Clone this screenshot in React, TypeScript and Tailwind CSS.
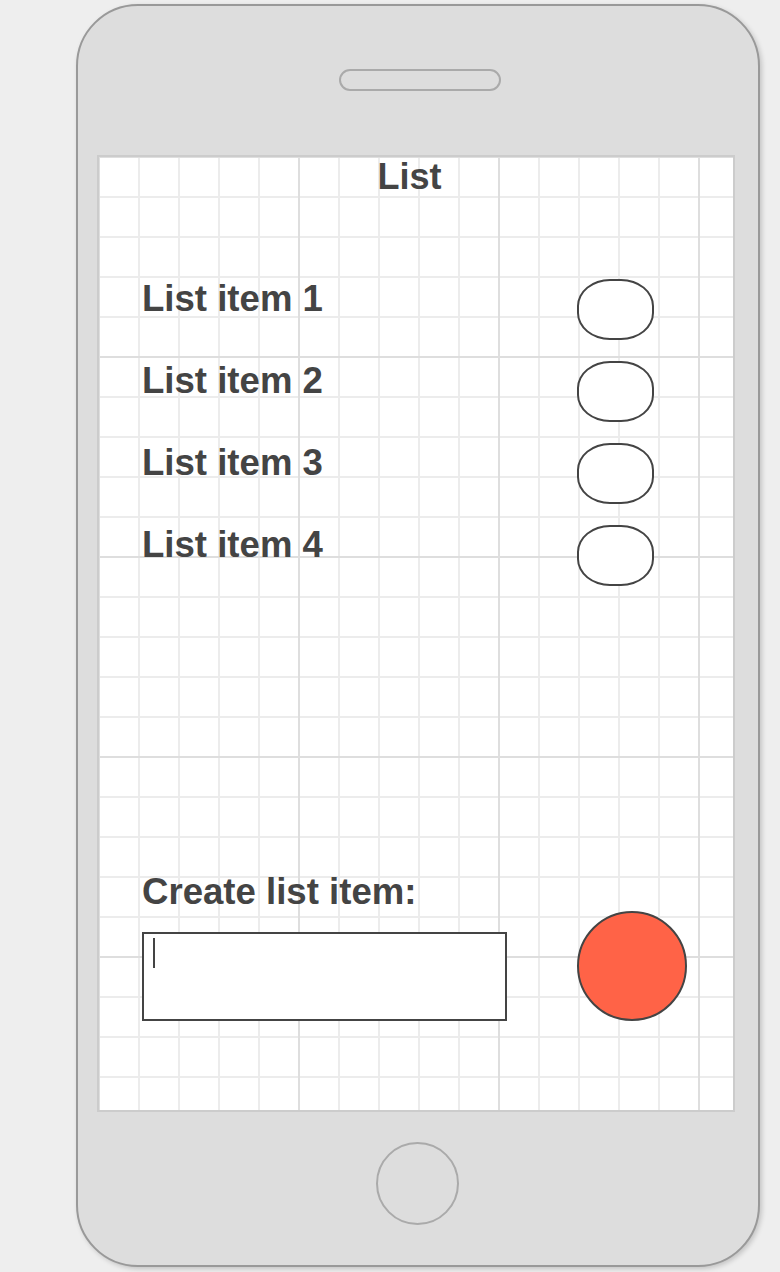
import React from "react";

const font = { fontFamily: '"Liberation Sans", Arial, Helvetica, sans-serif' };

function Toggle() {
  return <div className="w-[77px] h-[61px] shrink-0 border-2 border-[#444444] bg-white rounded-[33px/27px]" />;
}

export default function App() {
  const items = ["List item 1", "List item 2", "List item 3", "List item 4"];
  return (
    <div className="w-[780px] h-[1272px] bg-[#eeeeee] pt-[4px] pl-[76px]" style={font}>
      <div className="w-[684px] h-[1263px] rounded-[62px] border-2 border-[#999999] bg-[#dddddd] shadow-[2px_2px_5px_rgba(0,0,0,0.18)] flex flex-col">
        <div className="mt-[63px] ml-[261px] w-[162px] h-[22px] rounded-full border-2 border-[#aaaaaa]" />
        <div className="mt-[64px] ml-[19px] w-[638px] h-[957px] border-2 border-[#cccccc] bg-white bg-[linear-gradient(to_right,#dedede_2px,transparent_2px),linear-gradient(to_bottom,#dedede_2px,transparent_2px),linear-gradient(to_right,#ececec_2px,transparent_2px),linear-gradient(to_bottom,#ececec_2px,transparent_2px)] bg-[size:200px_200px,200px_200px,40px_40px,40px_40px] bg-[position:199px_199px,199px_199px,39px_39px,39px_39px] flex flex-col text-[#444444] font-bold">
          <div className="h-[40px] leading-[40px] text-[36px] text-center pr-[13px]">List</div>
          <div className="mt-[82px] flex flex-col gap-[21px]">
            {items.map((t) => (
              <div key={t} className="flex items-start pl-[42px]">
                <div className="w-[436px] h-[40px] leading-[40px] text-[36.6px] pl-[1px]">{t}</div>
                <Toggle />
              </div>
            ))}
          </div>
          <div className="mt-[286px] flex items-end pl-[42px]">
            <div className="w-[436px] flex flex-col">
              <div className="h-[40px] leading-[40px] text-[36.6px] pl-[1px]">Create list item:</div>
              <div className="mt-[20px] ml-[1px] w-[365px] h-[89px] border-2 border-[#444444] bg-white">
                <div className="ml-[9px] mt-[4px] w-[2px] h-[30px] bg-[#444444]" />
              </div>
            </div>
            <div className="w-[110px] h-[110px] rounded-full border-2 border-[#444444] bg-[#ff6347]" />
          </div>
        </div>
        <div className="mt-[30px] ml-[298px] w-[83px] h-[83px] rounded-full border-2 border-[#aaaaaa]" />
      </div>
    </div>
  );
}
